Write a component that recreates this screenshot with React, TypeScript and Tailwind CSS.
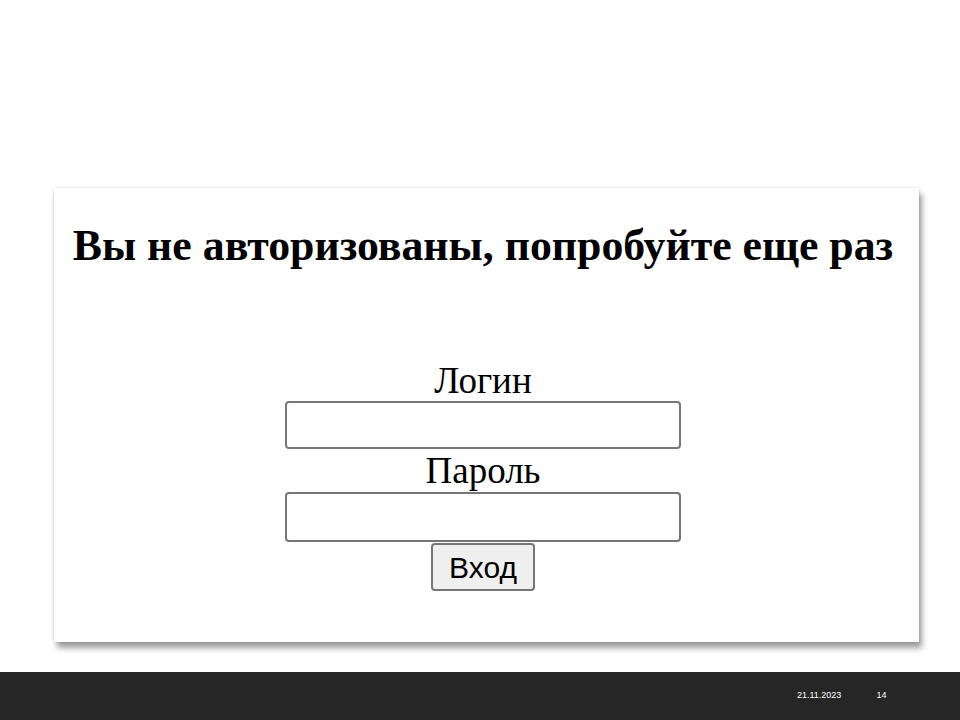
export default function App() {
  return (
    <div className="w-[960px] h-[720px] bg-white flex flex-col overflow-hidden">
      <div className="flex-1 pt-[188px] pl-[54px]">
        <div className="w-[865px] h-[454px] bg-white shadow-[0_0_3px_rgba(0,0,0,0.15),3px_6px_6px_rgba(0,0,0,0.38)] flex flex-col items-center pr-[7px]" style={{ fontFamily: '"Liberation Serif", "Times New Roman", serif' }}>
          <h1 className="mt-[31px] text-[43.8px] leading-[53px] font-bold text-black">Вы не авторизованы, попробуйте еще раз</h1>
          <div className="mt-[89px] flex flex-col items-center">
            <label className="text-[37px] leading-[40px] text-black">Логин</label>
            <input className="w-[396px] h-[48px] border-2 border-[#767676] rounded-[4px] bg-white" />
            <label className="text-[37px] leading-[43px] text-black">Пароль</label>
            <input type="password" className="w-[396px] h-[50px] border-2 border-[#767676] rounded-[4px] bg-white" />
            <button className="mt-[1px] w-[104px] h-[48px] border-2 border-[#767676] rounded-[4px] bg-[#efefef] text-[30px] text-black" style={{ fontFamily: '"Liberation Sans", Arial, sans-serif' }}>Вход</button>
          </div>
        </div>
      </div>
      <div className="h-[48px] bg-[#262626] flex items-center text-white text-[9px]" style={{ fontFamily: '"Liberation Sans", Arial, sans-serif' }}>
        <span className="ml-[797px]">21.11.2023</span>
        <span className="ml-[35px]">14</span>
      </div>
    </div>
  );
}
